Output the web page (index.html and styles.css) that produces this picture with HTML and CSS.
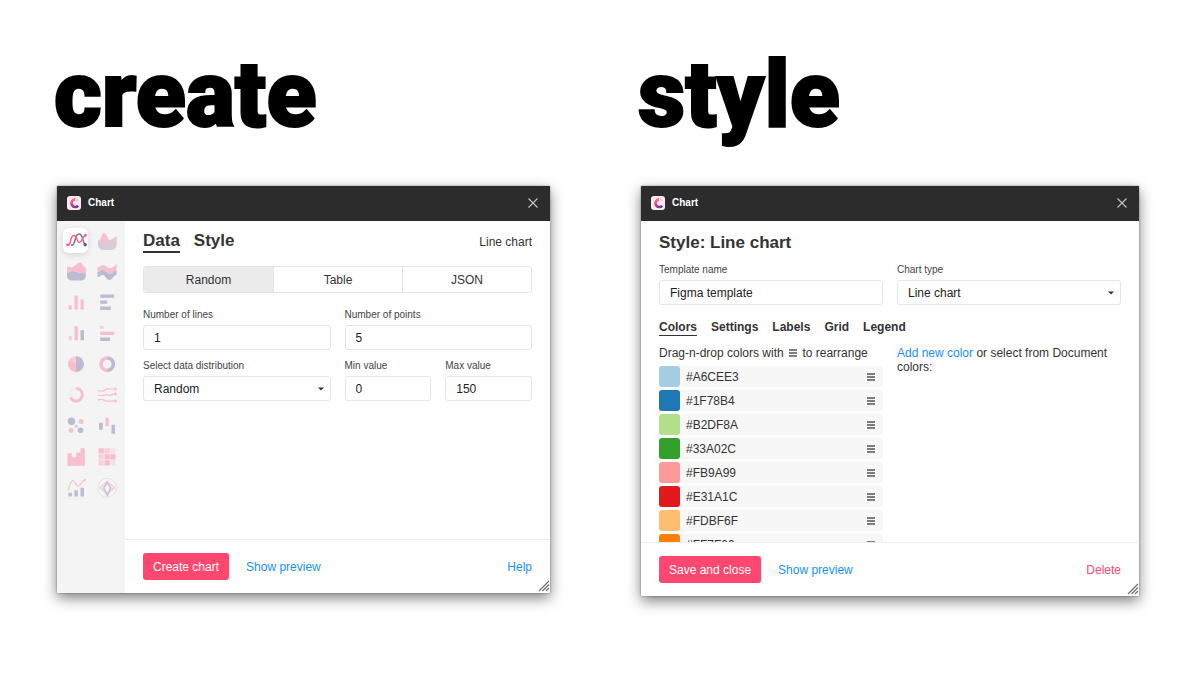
FILE: index.html
```html
<!DOCTYPE html>
<html lang="en">
<head>
<meta charset="utf-8">
<meta name="viewport" content="width=device-width, initial-scale=1">
<title>Chart</title>
<link rel="stylesheet" href="styles.css">
</head>
<body>
<svg class="defs" aria-hidden="true">
  <defs>
    <linearGradient id="brand" x1="0" y1="0" x2="0" y2="1"><stop offset="0" stop-color="#ff6b91"/><stop offset=".55" stop-color="#ff3d73"/><stop offset="1" stop-color="#66409a"/></linearGradient>
    <symbol id="logo" viewBox="0 0 14 14"><rect width="14" height="14" rx="3" fill="#fbe9f0"/><path d="M8 3.400A3.800 3.800 0 1 0 11.200 9.600" fill="none" stroke="url(#brand)" stroke-width="2.600"/><path d="M9.400 3.400l1.400 1.200" stroke="#f7a6bd" stroke-width="1.200"/></symbol>
    <symbol id="close" viewBox="0 0 10 10"><path d="M.5.5l9 9M9.5.5l-9 9" stroke="#c4c4c4" stroke-width="1.1"/></symbol>
    <symbol id="caret" viewBox="0 0 6 4"><path d="M0 .5h6L3 3.6z" fill="#333"/></symbol>
    <symbol id="handle" viewBox="0 0 8 8"><path d="M0 1h8M0 4h8M0 7h8" stroke="#555" stroke-width="1.3"/></symbol>
    <symbol id="grip" viewBox="0 0 12 12"><path d="M1 11L11 1M4.5 11L11 4.5M8 11l3-3" stroke="#6d6d6d" stroke-width="1.2"/></symbol>
  </defs>
</svg>
<main class="board">
  <section class="column">
    <h1 class="headline">create</h1>
    <div class="window">
      <header class="titlebar">
        <svg class="logo" aria-hidden="true"><use href="#logo"/></svg>
        <span class="app-name">Chart</span>
        <button class="close" type="button" aria-label="Close"><svg aria-hidden="true"><use href="#close"/></svg></button>
      </header>
      <div class="split">
        <nav class="chart-types" aria-label="Chart types">
          <button class="type active" type="button" aria-label="Line chart"><svg viewBox="0 0 20 20"><g fill="none" stroke-width="1.500"><path class="sp" d="M5 14C10 15.500 8 3 13 3c4.500 0 3 8 6 10.500" opacity=".85"/><path class="sr" d="M1.500 14C5.500 15.500 3.500 5 7.500 4.500S10.500 12 13.500 11.500 16 5.500 19.500 4.500"/></g><circle class="r" cx="1.500" cy="13.800" r="1.400"/><circle class="p" cx="19.200" cy="13.800" r="1.700"/><circle class="r" cx="19.400" cy="4.300" r="1.500"/></svg></button>
          <button class="type" type="button" aria-label="Area chart"><svg viewBox="0 0 20 20"><path class="r" d="M1 11C4 9.500 4.500 2 7 2c2.500 0 3.500 7 6 7s4-3 6.500-4v9H1z"/><path fill="#a16f9c" d="M1 9c3 0 4 3 7 3 5 0 7-3 11.500-6v8a5 5 0 0 1-5 5H6a5 5 0 0 1-5-5z"/></svg></button>
          <button class="type" type="button" aria-label="Stacked area chart"><svg viewBox="0 0 20 20"><path class="r" d="M1 5c2-1 3 1 5.500 0S11 .500 14 .500c3 0 3 5 5.800 5v5.500C16 11.500 13 11 9 9.500 5 8 4 10 1 11z"/><path class="p" d="M1 11c3-1 4-3 8-1.500s7 2 10.800 1.500V14a4.500 4.500 0 0 1-4.500 4.500H5.500A4.500 4.500 0 0 1 1 14z"/></svg></button>
          <button class="type" type="button" aria-label="Stream chart"><svg viewBox="0 0 20 20"><path class="r" d="M.500 5C3 5 4 3 6 3s4 3 7 3 4-2 6.500-4v6c-3 1-3 4-6 4S8.500 7.500 6 7.500 3 10 .500 10z"/><path class="p" d="M.500 10C3 10 4 7.500 6 7.500s4.500 4.500 7.500 4.500 3-3 6-4v5c-3 0-4 5-7 5S8 13 6 13s-3 2-5.500 2z"/></svg></button>
          <button class="type" type="button" aria-label="Bar chart"><svg viewBox="0 0 20 20"><path class="r" d="M2.500 12.500h3.300v4H2.500zM8.500 2.500h3.300v14H8.500zM14.500 6.500h3.300v10h-3.300z"/></svg></button>
          <button class="type" type="button" aria-label="Horizontal bar chart"><svg viewBox="0 0 20 20"><path class="p" d="M3.200 1.500h14v3.300h-14zM3.200 7.500h7v3.300h-7zM3.200 13.500h10.600V17H3.200z"/></svg></button>
          <button class="type" type="button" aria-label="Grouped bar chart"><svg viewBox="0 0 20 20"><path class="r" d="M2.500 12.200h3.300v4H2.500z" opacity=".7"/><path class="r" d="M8.500 2.200h3.300v14H8.500z"/><path class="p" d="M14.500 6.200h3.500v10h-3.500z"/></svg></button>
          <button class="type" type="button" aria-label="Grouped horizontal bar chart"><svg viewBox="0 0 20 20"><path class="r" d="M3.200 1.800h3.300v3H3.200z" opacity=".7"/><path class="r" d="M3.200 7.800h14V11h-14z"/><path class="p" d="M3.200 13.500h9.800V17H3.200z"/></svg></button>
          <button class="type" type="button" aria-label="Pie chart"><svg viewBox="0 0 20 20"><path class="r" d="M10 1.200a8 8 0 0 0 0 16z"/><path class="p" d="M10 1.200a8 8 0 0 1 0 16z"/><path fill="#fff" opacity=".25" d="M10 9.200L3 5.500a8 8 0 0 1 7-4.300z"/></svg></button>
          <button class="type" type="button" aria-label="Donut chart"><svg viewBox="0 0 20 20"><g fill="none" stroke-width="3.600"><path class="sr" d="M10.200 15.400a6.200 6.200 0 0 1 0-12.400"/><path class="sp" d="M10.200 3a6.200 6.200 0 0 1 0 12.400"/></g></svg></button>
          <button class="type" type="button" aria-label="Progress chart"><svg viewBox="0 0 20 20"><g fill="none" stroke-width="3"><circle cx="10.200" cy="8.800" r="6.200" stroke="#ccc" opacity=".4"/><path class="sr" d="M10.200 2.600a6.200 6.200 0 1 1-5.600 9"/></g></svg></button>
          <button class="type" type="button" aria-label="Sparklines"><svg viewBox="0 0 20 20"><path class="sr" fill="none" stroke-width="1.200" d="M.500 5c3-1 4 1 6 0s3-3 6-2l6 0M1 9.500h4c2 1 4-2 6-.500s4-1 7-1M.500 14c3-1 5-1 7 .500s5 0 11 .500"/><path class="r" d="M17.500 1l3 2-3 2zM17.500 6l3 2-3 2zM17.500 13l3 2-3 2z"/></svg></button>
          <button class="type" type="button" aria-label="Scatter plot"><svg viewBox="0 0 20 20"><circle class="p" cx="5.500" cy="4.200" r="3.700"/><circle class="r" cx="15.200" cy="4.500" r="2.500"/><circle class="p" cx="10.200" cy="9.200" r="1.600" opacity=".6"/><circle class="r" cx="5.200" cy="13.500" r="2.400"/><circle class="p" cx="14.500" cy="13.200" r="2.800"/></svg></button>
          <button class="type" type="button" aria-label="Candlestick chart"><svg viewBox="0 0 20 20"><path class="p" d="M2 5.800h3.800v7H2zM14.500 7.800H18v9h-3.500z"/><path class="r" d="M8.500.800h3.300v8.400H8.500z"/></svg></button>
          <button class="type" type="button" aria-label="Histogram"><svg viewBox="0 0 20 20"><path class="r" d="M1.500 5.200h4.300v4h4.400V4.500h4.300V.200h4.300v17.600H1.500z"/></svg></button>
          <button class="type" type="button" aria-label="Heatmap"><svg viewBox="0 0 20 20"><path class="r" d="M1.500.200h5.300v5.300H1.500zM7.500 6.200h5.300v5.300H7.500zM13.200 6.200h5.300v5.300h-5.300zM7.500 12.200h5.300v5.300H7.500z"/><path class="r" opacity=".65" d="M7.500.200h5.300v5.300H7.500zM1.500 6.200h5.300v5.300H1.500zM1.500 12.200h5.300v5.300H1.500z"/><path class="r" opacity=".35" d="M13.200.200h5.300v5.300h-5.300zM13.200 12.200h5.300v5.300h-5.300z"/></svg></button>
          <button class="type" type="button" aria-label="Combined chart"><svg viewBox="0 0 20 20"><path class="p" d="M2.500 13.800h3.300v3.700H2.500zM8.500 11.200h3.300v6.300H8.500zM14.500 8.800h3.500v8.700h-3.500z"/><path class="sr" fill="none" stroke-width="1.200" d="M2 11.500C3.500 7 4.500 1.500 7 1.500s2.500 6 5 6S15 2 18.500 1"/><circle class="r" cx="18.800" cy="1" r="1.200"/></svg></button>
          <button class="type" type="button" aria-label="Radar chart"><svg viewBox="0 0 20 20"><g fill="none"><circle cx="10.200" cy="8.800" r="9.500" stroke="#999" stroke-width=".8" opacity=".7"/><path class="sr" stroke-width="1.400" opacity=".8" d="M10.200 2.500L17.500 8.800l-7.300 5.700L3 8.800z"/><path class="sp" stroke-width="1.600" opacity=".8" d="M10.200 4l3.500 4.800-3.500 7.500-3.500-7.500z"/></g></svg></button>
        </nav>
        <form class="pane">
          <div class="pane-body create-body">
            <div class="mode-row">
              <div class="tabs large">
                <button class="tab active" type="button">Data</button>
                <button class="tab" type="button">Style</button>
              </div>
              <span>Line chart</span>
            </div>
            <div class="segments">
              <button class="segment active" type="button">Random</button>
              <button class="segment" type="button">Table</button>
              <button class="segment" type="button">JSON</button>
            </div>
            <div class="fields">
              <div class="field"><label for="lines">Number of lines</label><input id="lines" type="text" value="1"></div>
              <div class="field"><label for="points">Number of points</label><input id="points" type="text" value="5"></div>
              <div class="field"><label for="distribution">Select data distribution</label>
                <div class="select"><select id="distribution"><option>Random</option></select><svg aria-hidden="true"><use href="#caret"/></svg></div></div>
              <div class="fields">
                <div class="field"><label for="min">Min value</label><input id="min" type="text" value="0"></div>
                <div class="field"><label for="max">Max value</label><input id="max" type="text" value="150"></div>
              </div>
            </div>
          </div>
          <footer class="actions">
            <button class="primary" type="button">Create chart</button>
            <a class="link" href="#preview">Show preview</a>
            <a class="link end" href="#help">Help</a>
          </footer>
        </form>
      </div>
      <svg class="grip" aria-hidden="true"><use href="#grip"/></svg>
    </div>
  </section>

  <section class="column">
    <h1 class="headline">style</h1>
    <div class="window">
      <header class="titlebar">
        <svg class="logo" aria-hidden="true"><use href="#logo"/></svg>
        <span class="app-name">Chart</span>
        <button class="close" type="button" aria-label="Close"><svg aria-hidden="true"><use href="#close"/></svg></button>
      </header>
      <form class="pane">
        <div class="pane-body style-body">
          <h2 class="pane-title">Style: Line chart</h2>
          <div class="fields">
            <div class="field"><label for="template">Template name</label><input id="template" type="text" value="Figma template"></div>
            <div class="field"><label for="type">Chart type</label>
              <div class="select"><select id="type"><option>Line chart</option></select><svg aria-hidden="true"><use href="#caret"/></svg></div></div>
          </div>
          <div class="tabs sections">
            <button class="tab active" type="button">Colors</button>
            <button class="tab" type="button">Settings</button>
            <button class="tab" type="button">Labels</button>
            <button class="tab" type="button">Grid</button>
            <button class="tab" type="button">Legend</button>
          </div>
          <div class="fields">
            <div>
              <p class="hint">Drag-n-drop colors with <svg class="handle" aria-hidden="true"><use href="#handle"/></svg> to rearrange</p>
              <ul class="colors">
                <li class="color"><span class="swatch" style="background:#a6cee3"></span>#A6CEE3<svg class="handle" aria-hidden="true"><use href="#handle"/></svg></li>
                <li class="color"><span class="swatch" style="background:#1f78b4"></span>#1F78B4<svg class="handle" aria-hidden="true"><use href="#handle"/></svg></li>
                <li class="color"><span class="swatch" style="background:#b2df8a"></span>#B2DF8A<svg class="handle" aria-hidden="true"><use href="#handle"/></svg></li>
                <li class="color"><span class="swatch" style="background:#33a02c"></span>#33A02C<svg class="handle" aria-hidden="true"><use href="#handle"/></svg></li>
                <li class="color"><span class="swatch" style="background:#fb9a99"></span>#FB9A99<svg class="handle" aria-hidden="true"><use href="#handle"/></svg></li>
                <li class="color"><span class="swatch" style="background:#e31a1c"></span>#E31A1C<svg class="handle" aria-hidden="true"><use href="#handle"/></svg></li>
                <li class="color"><span class="swatch" style="background:#fdbf6f"></span>#FDBF6F<svg class="handle" aria-hidden="true"><use href="#handle"/></svg></li>
                <li class="color"><span class="swatch" style="background:#ff7f00"></span>#FF7F00<svg class="handle" aria-hidden="true"><use href="#handle"/></svg></li>
              </ul>
            </div>
            <p class="hint"><a class="link" href="#add">Add new color</a> or select from Document colors:</p>
          </div>
        </div>
        <footer class="actions">
          <button class="primary" type="button">Save and close</button>
          <a class="link" href="#preview">Show preview</a>
          <a class="link danger end" href="#delete">Delete</a>
        </footer>
      </form>
      <svg class="grip" aria-hidden="true"><use href="#grip"/></svg>
    </div>
  </section>
</main>
</body>
</html>
```
FILE: styles.css
```css
* { box-sizing: border-box; }

body {
  margin: 0;
  background: #fff;
  color: #333;
  font: 12px/14px "Liberation Sans", Arial, sans-serif;
}

button, input, select { font: inherit; color: inherit; }
button { border: 0; padding: 0; background: none; cursor: pointer; }
svg { display: block; overflow: visible; }
h1, h2, p, ul { margin: 0; padding: 0; }
.defs { position: absolute; width: 0; height: 0; }

.board {
  display: grid;
  grid-template-columns: 493fr 498fr;
  gap: 91px;
  align-items: start;
  padding: 41px 61px 40px 57px;
}

.headline {
  margin: 0 0 37px -3px;
  color: #000;
  font: 900 92px/108px Roboto, sans-serif;
  -webkit-text-stroke: 2px #000;
}

.window {
  position: relative;
  background: #fff;
  border-radius: 1px;
  box-shadow: 0 0 2px rgba(0, 0, 0, .45), 0 5px 14px rgba(0, 0, 0, .5);
}

.titlebar {
  display: flex;
  align-items: center;
  gap: 7px;
  height: 35px;
  padding: 0 12px 1px 10px;
  background: #2c2c2c;
  color: #fff;
  font-size: 10px;
  font-weight: bold;
}
.logo { width: 14px; height: 14px; }
.close { margin-left: auto; }
.close svg { width: 10px; height: 10px; }

.split { display: grid; grid-template-columns: 68px 1fr; }

.chart-types {
  display: grid;
  grid-template-columns: 25px 25px;
  grid-auto-rows: 25px;
  gap: 6px;
  justify-content: center;
  padding-top: 7px;
  background: #f4f4f4;
}
.type { display: grid; place-items: center; border-radius: 6px; }
.type svg { width: 20px; height: 20px; opacity: .3; }
.type.active { background: #fff; box-shadow: 0 2px 6px rgba(0, 0, 0, .12); }
.type.active svg { opacity: .85; }
.r { fill: #ff476f; }
.p { fill: #3f3a86; }
.sr { stroke: #ff476f; }
.sp { stroke: #3f3a86; }

.pane-body { padding: 0 18px; }
.create-body { min-height: 318px; padding-top: 9px; }
.style-body { height: 321px; padding-top: 12px; overflow: hidden; }
.pane-title { font-size: 17px; line-height: 20px; margin-bottom: 10px; }

.mode-row {
  display: flex;
  justify-content: space-between;
  align-items: center;
  margin-bottom: 13px;
}

.tabs { display: flex; gap: 14px; font-weight: bold; line-height: 16px; }
.tab { border-bottom: 1px solid transparent; }
.tab.active { border-color: #333; }
.tabs.large { font-size: 17px; line-height: 21px; }
.tabs.large .tab { border-bottom-width: 2px; }
.tabs.sections { margin: 14px 0 10px; }

.segments {
  display: grid;
  grid-template-columns: repeat(3, 1fr);
  height: 27px;
  margin-bottom: 15px;
  border: 1px solid #e5e5e5;
  border-radius: 3px;
}
.segment + .segment { border-left: 1px solid #e5e5e5; }
.segment.active { background: #ebebeb; }

.fields { display: grid; grid-template-columns: 1fr 1fr; gap: 9px 14px; }
.field { display: grid; gap: 3px; min-width: 0; }
.field label { font-size: 10px; line-height: 14px; color: #444; }
.field input, .field select {
  width: 100%;
  height: 25px;
  padding: 0 10px;
  border: 1px solid #e5e5e5;
  border-radius: 3px;
  background: #fff;
  color: #222;
  appearance: none;
}
.select { position: relative; }
.select svg {
  position: absolute;
  top: 11px;
  right: 7px;
  width: 6px;
  height: 4px;
  pointer-events: none;
}

.hint { margin-bottom: 6px; }
.handle { width: 8px; height: 8px; }
.hint .handle { display: inline-block; margin: 0 2px; }
.colors { display: grid; gap: 3px; list-style: none; }
.color {
  display: flex;
  align-items: center;
  gap: 6px;
  height: 21px;
  padding-right: 8px;
  background: #f7f7f7;
  border-radius: 3px;
}
.color .handle { margin-left: auto; }
.swatch { width: 21px; height: 21px; border-radius: 3px; }

.actions {
  display: flex;
  align-items: center;
  gap: 17px;
  padding: 13px 18px;
  border-top: 1px solid #ededed;
}
.primary {
  height: 27px;
  padding: 0 10px;
  border-radius: 3px;
  background: #ff476f;
  color: #fff;
}
.link { color: #1890ff; text-decoration: none; }
.link.danger { color: #ff476f; }
.end { margin-left: auto; }

.grip {
  position: absolute;
  right: 0;
  bottom: 1px;
  width: 12px;
  height: 12px;
}
```
